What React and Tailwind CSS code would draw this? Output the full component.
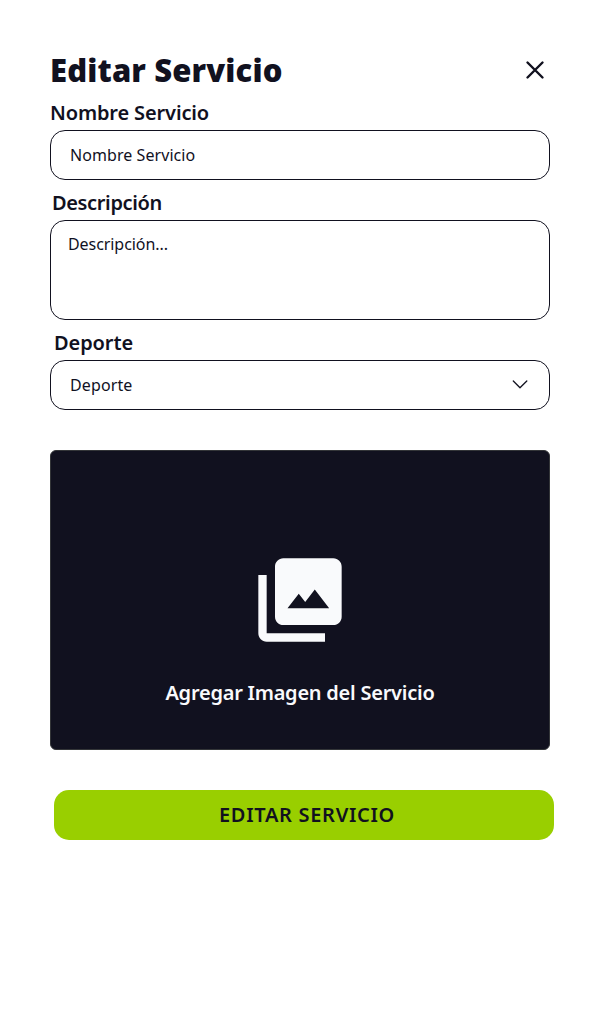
import React from "react";

function Label({ className, children }) {
  return (
    <label className={`block h-[30px] text-[20px] leading-[30px] font-semibold whitespace-nowrap ${className}`}>
      {children}
    </label>
  );
}

export default function App() {
  return (
    <main className="min-h-screen w-[600px] bg-white px-[50px] pt-[50px] font-['Noto_Sans',sans-serif] text-[#11111f]">
      <header className="flex h-10 items-center justify-between">
        <h1 className="text-[31px] leading-10 font-black tracking-[0.15px] whitespace-nowrap">Editar Servicio</h1>
        <button aria-label="Cerrar" className="mr-[5px]">
          <svg width="20" height="20" viewBox="0 0 20 20" fill="none" stroke="#11111f" strokeWidth="2.4" strokeLinecap="round">
            <path d="M2.5 2.5 17.5 17.5M17.5 2.5 2.5 17.5" />
          </svg>
        </button>
      </header>

      <Label className="mt-2 tracking-[-0.14px]">Nombre Servicio</Label>
      <div className="mt-[2px] flex h-[50px] items-center rounded-[15px] border border-[#11111f] pl-[19px] text-[16px] tracking-[0.07px]">
        <span>Nombre Servicio</span>
      </div>

      <Label className="mt-2 pl-[2px] tracking-[-0.36px]">Descripción</Label>
      <div className="mt-[2px] h-[100px] rounded-[15px] border border-[#11111f] pt-[11px] pl-[17px] text-[16px] leading-6 tracking-[-0.07px]">
        <span>Descripción...</span>
      </div>

      <Label className="mt-2 pl-1 tracking-[-0.1px]">Deporte</Label>
      <div className="mt-[2px] flex h-[50px] items-center justify-between rounded-[15px] border border-[#11111f] pr-5 pl-[19px] text-[16px] tracking-[0.12px]">
        <span>Deporte</span>
        <svg width="18" height="12" viewBox="0 0 18 12" fill="none" stroke="#11111f" strokeWidth="1.3" strokeLinecap="round" strokeLinejoin="round">
          <path d="M2.3 2 9 8.8 15.8 2" />
        </svg>
      </div>

      <section className="mt-10 flex h-[300px] flex-col items-center rounded-[6px] border border-[#333538] bg-[#11111f] pt-[99px] text-[#f9fafc]">
        <svg width="100" height="100" viewBox="0 0 24 24" fill="#f9fafc">
          <path d="M2 6h2v14h14v2H4c-1.1 0-2-.9-2-2V6Z" />
          <path fillRule="evenodd" d="M8 2h12c1.1 0 2 .9 2 2v12c0 1.1-.9 2-2 2H8c-1.1 0-2-.9-2-2V4c0-1.1.9-2 2-2Zm1 12h10l-3.45-4.5-2.3 3-1.55-2L9 14Z" />
        </svg>
        <p className="mt-7 text-[20px] leading-[30px] font-semibold tracking-[-0.24px] whitespace-nowrap">Agregar Imagen del Servicio</p>
      </section>

      <button className="mt-10 ml-1 flex h-[50px] w-[500px] items-center justify-center rounded-[15px] bg-[#99cf00] pl-[6px] text-[20px] font-semibold tracking-[0.7px] whitespace-nowrap">
        <span>EDITAR SERVICIO</span>
      </button>
    </main>
  );
}
